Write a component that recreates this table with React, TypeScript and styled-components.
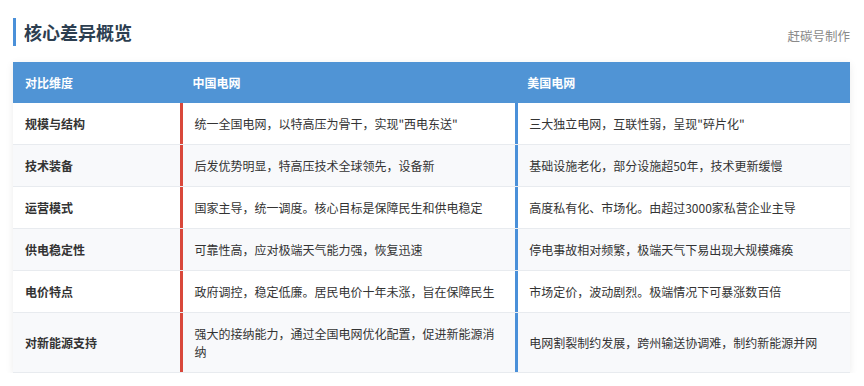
import React from "react";
import styled, { createGlobalStyle } from "styled-components";

const rows = [
  {
    dim: "规模与结构",
    cn: "统一全国电网，以特高压为骨干，实现\"西电东送\"",
    us: "三大独立电网，互联性弱，呈现\"碎片化\"",
  },
  {
    dim: "技术装备",
    cn: "后发优势明显，特高压技术全球领先，设备新",
    us: "基础设施老化，部分设施超50年，技术更新缓慢",
  },
  {
    dim: "运营模式",
    cn: "国家主导，统一调度。核心目标是保障民生和供电稳定",
    us: "高度私有化、市场化。由超过3000家私营企业主导",
  },
  {
    dim: "供电稳定性",
    cn: "可靠性高，应对极端天气能力强，恢复迅速",
    us: "停电事故相对频繁，极端天气下易出现大规模瘫痪",
  },
  {
    dim: "电价特点",
    cn: "政府调控，稳定低廉。居民电价十年未涨，旨在保障民生",
    us: "市场定价，波动剧烈。极端情况下可暴涨数百倍",
  },
  {
    dim: "对新能源支持",
    cn: "强大的接纳能力，通过全国电网优化配置，促进新能源消纳",
    us: "电网割裂制约发展，跨州输送协调难，制约新能源并网",
  },
];

export default function App() {
  return (
    <>
      <GlobalStyle />
      <Page>
        <TitleBar>
          <Title>核心差异概览</Title>
          <Credit>赶碳号制作</Credit>
        </TitleBar>
        <Table>
          <HeadRow>
            <HeadCell>对比维度</HeadCell>
            <HeadCell>中国电网</HeadCell>
            <HeadCell>美国电网</HeadCell>
          </HeadRow>
          {rows.map((r, i) => (
            <Row key={r.dim} striped={i % 2 === 1}>
              <Cell bold>{r.dim}</Cell>
              <Cell accent="#d9483b">{r.cn}</Cell>
              <Cell accent="#4a90d9">{r.us}</Cell>
            </Row>
          ))}
        </Table>
      </Page>
    </>
  );
}

const GlobalStyle = createGlobalStyle`
  body {
    margin: 0;
    background: #ffffff;
    font-family: "Noto Sans CJK SC", "Noto Sans", sans-serif;
  }
`;

const Page = styled.div`
  padding: 18px 14px 0 13px;
`;

const TitleBar = styled.div`
  display: flex;
  justify-content: space-between;
  align-items: flex-end;
  margin-bottom: 16px;
`;

const Title = styled.h2`
  margin: 0;
  padding-left: 8px;
  border-left: 3px solid #4a90d9;
  font-size: 18px;
  line-height: 28px;
  font-weight: 700;
  color: #2c3e50;
`;

const Credit = styled.span`
  font-size: 12.5px;
  line-height: 20px;
  color: #8a8a8a;
`;

const Table = styled.div`
  display: flex;
  flex-direction: column;
  background: #ffffff;
  box-shadow: 0 2px 8px rgba(0, 0, 0, 0.08);
`;

const grid = `
  display: grid;
  grid-template-columns: 20% 40% 40%;
`;

const HeadRow = styled.div`
  ${grid}
  background: #5094d5;
`;

const HeadCell = styled.div`
  padding: 12px 12px 11px;
  font-size: 12px;
  line-height: 18px;
  font-weight: 700;
  color: #ffffff;
`;

const Row = styled.div<{ striped?: boolean }>`
  ${grid}
  background: ${({ striped }) => (striped ? "#f8f9fb" : "#ffffff")};
  border-bottom: 1px solid #e8ebef;
`;

const Cell = styled.div<{ bold?: boolean; accent?: string }>`
  display: flex;
  align-items: center;
  padding: 12px 12px 11px ${({ accent }) => (accent ? "11px" : "12px")};
  border-left: ${({ accent }) => (accent ? `3px solid ${accent}` : "none")};
  font-size: 12px;
  line-height: 18px;
  font-weight: ${({ bold }) => (bold ? 700 : 400)};
  color: #333333;
`;
